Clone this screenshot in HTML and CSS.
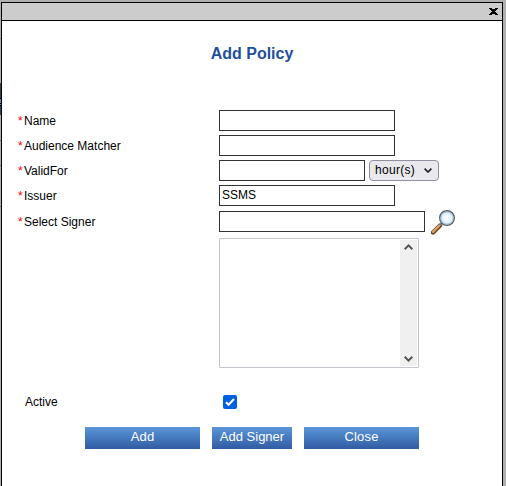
FILE: index.html
```html
<!DOCTYPE html>
<html lang="en">
<head>
<meta charset="utf-8">
<title>Add Policy</title>
<link rel="stylesheet" href="styles.css">
</head>
<body>
<main class="dialog">
  <header class="bar">
    <button class="close" aria-label="Close dialog"><svg width="9" height="7" viewBox="0 0 9 7" shape-rendering="crispEdges"><path d="M0 0h3v1h3V0h3v1H8v1H7v1H6v1h1v1h1v1h1v1H6V6H3v1H0V6h1V5h1V4h1V3H2V2H1V1H0z"/></svg></button>
  </header>
  <h1 class="title">Add Policy</h1>
  <form class="form">
    <div class="row"><label class="label req" for="name">Name</label><input class="field" id="name"></div>
    <div class="row"><label class="label req" for="aud">Audience Matcher</label><input class="field" id="aud"></div>
    <div class="row"><label class="label req" for="valid">ValidFor</label><input class="field short" id="valid">
      <button type="button" class="unit">hour(s)<svg width="8" height="5" viewBox="0 0 8 5"><path d="M.6.6 4 4 7.4.6" fill="none" stroke="#15141a" stroke-width="1.5"/></svg></button></div>
    <div class="row issuer"><label class="label req" for="issuer">Issuer</label><input class="field" id="issuer" value="SSMS"></div>
    <div class="row signer"><label class="label req" for="signer">Select Signer</label><input class="field long" id="signer">
      <svg class="search" width="26" height="26" viewBox="0 0 26 26">
        <defs>
          <radialGradient id="lens"><stop offset="0" stop-color="#fff"/><stop offset=".6" stop-color="#e4f5ff"/><stop offset="1" stop-color="#b9dcf2"/></radialGradient>
        </defs>
        <path d="m9 15.5-7 7" stroke="#68451f" stroke-width="4.4" stroke-linecap="round"/>
        <path d="m8.6 15.3-6.6 6.6" stroke="#dfa762" stroke-width="2.2" stroke-linecap="round"/>
        <path d="m9 15.5 2-2" stroke="#777" stroke-width="2.5"/>
        <circle cx="16" cy="8" r="7.3" fill="url(#lens)" stroke="#56616b" stroke-width="1.4"/>
        <circle cx="16" cy="8" r="6.2" fill="none" stroke="#a9bac5" stroke-width=".9"/>
      </svg></div>
    <div class="list">
      <div class="scroll">
        <svg width="9" height="6" viewBox="0 0 9 6"><path d="M.7 5.2 4.5 1.4l3.8 3.8" fill="none" stroke="#555" stroke-width="2"/></svg>
        <svg width="9" height="6" viewBox="0 0 9 6"><path d="m.7.8 3.8 3.8L8.3.8" fill="none" stroke="#555" stroke-width="2"/></svg>
      </div>
    </div>
    <div class="active"><label class="active-label" for="active">Active</label>
      <span class="check" id="active" role="checkbox" aria-checked="true"><svg width="14" height="14" viewBox="0 0 14 14"><path d="m3 7.2 2.6 2.6L11 4" fill="none" stroke="#fff" stroke-width="2"/></svg></span></div>
    <div class="actions">
      <button type="button" class="btn">Add</button>
      <button type="button" class="btn mid">Add Signer</button>
      <button type="button" class="btn">Close</button>
    </div>
  </form>
</main>
</body>
</html>
```
FILE: styles.css
```css
* { box-sizing: border-box; }
html, body { height: 100%; }
body {
  margin: 0;
  padding: 2px 3px 0 1px;
  overflow: hidden;
  font: 12px/14px "Liberation Sans", Arial, sans-serif;
  color: #000;
  background:
    linear-gradient(#2f425c 0 15px, #000 15px 16px, #71879f 16px 20px, #000 20px 21px, #71879f 21px 22px, #000 22px 23px, #2f3f54 23px) 0 83px / 1px 32px no-repeat,
    linear-gradient(#888, #888) 0 38px / 1px 1px no-repeat,
    linear-gradient(#777, #777) 0 140px / 1px 1px no-repeat,
    linear-gradient(#777, #777) 0 165px / 1px 1px no-repeat,
    linear-gradient(#777, #777) 0 206px / 1px 1px no-repeat,
    #b0b0b0;
}
.dialog { height: 500px; border: 1px solid #000; background: #fff; }
.bar {
  height: 18px;
  display: flex;
  justify-content: flex-end;
  align-items: flex-start;
  padding: 5px 4px 0 0;
  background: #ccc;
  border-bottom: 1px solid #000;
}
button { font-family: inherit; }
.close { display: flex; padding: 0; border: 0; background: none; }
.title {
  margin: 23px 0 0;
  font-size: 16px;
  line-height: 20px;
  text-align: center;
  color: #1f4f9c;
}
.form { margin-top: 46px; }
.row { display: flex; height: 25px; padding-left: 16px; }
.issuer { height: 26px; }
.signer { height: 27px; }
.label { width: 201px; padding-top: 4px; }
.req::before { content: "*"; color: #f00; font-size: 12px; line-height: 10px; display: inline-block; width: 6px; }
.field {
  width: 176px;
  height: 21px;
  padding: 0 2px 1px;
  border: 1px solid #333;
  border-radius: 0;
  background: #fff;
  font: inherit;
}
.short { width: 146px; }
.long { width: 206px; }
.unit {
  display: flex;
  align-items: center;
  justify-content: space-between;
  width: 70px;
  height: 21px;
  margin-left: 4px;
  padding: 0 6px 1px 5px;
  border: 1px solid #8f8f9d;
  border-radius: 4px;
  background: #e9e9ed;
  font-size: 12px;
  letter-spacing: .3px;
  color: #000;
}
.search { margin: -1px 0 0 6px; }
.list {
  display: flex;
  justify-content: flex-end;
  width: 200px;
  height: 130px;
  margin-left: 217px;
  padding: 1px;
  border: 1px solid #c4c4cb;
  border-radius: 1px;
}
.scroll {
  display: flex;
  flex-direction: column;
  align-items: center;
  justify-content: space-between;
  width: 17px;
  padding: 4px 0;
  background: #f0f0f0;
}
.active { display: flex; height: 32px; margin-top: 27px; padding-left: 23px; }
.active-label { width: 198px; }
.check { width: 14px; height: 14px; border-radius: 2px; background: #0060df; }
.check svg { display: block; }
.actions { display: flex; gap: 12px; padding-left: 83px; }
.btn {
  width: 115px;
  height: 22px;
  padding: 0 0 3px;
  border: 0;
  background: linear-gradient(#5b96d9, #305ba3);
  color: #fff;
  font-size: 13px;
  letter-spacing: .2px;
}
.mid { width: 80px; letter-spacing: 0; }
```
